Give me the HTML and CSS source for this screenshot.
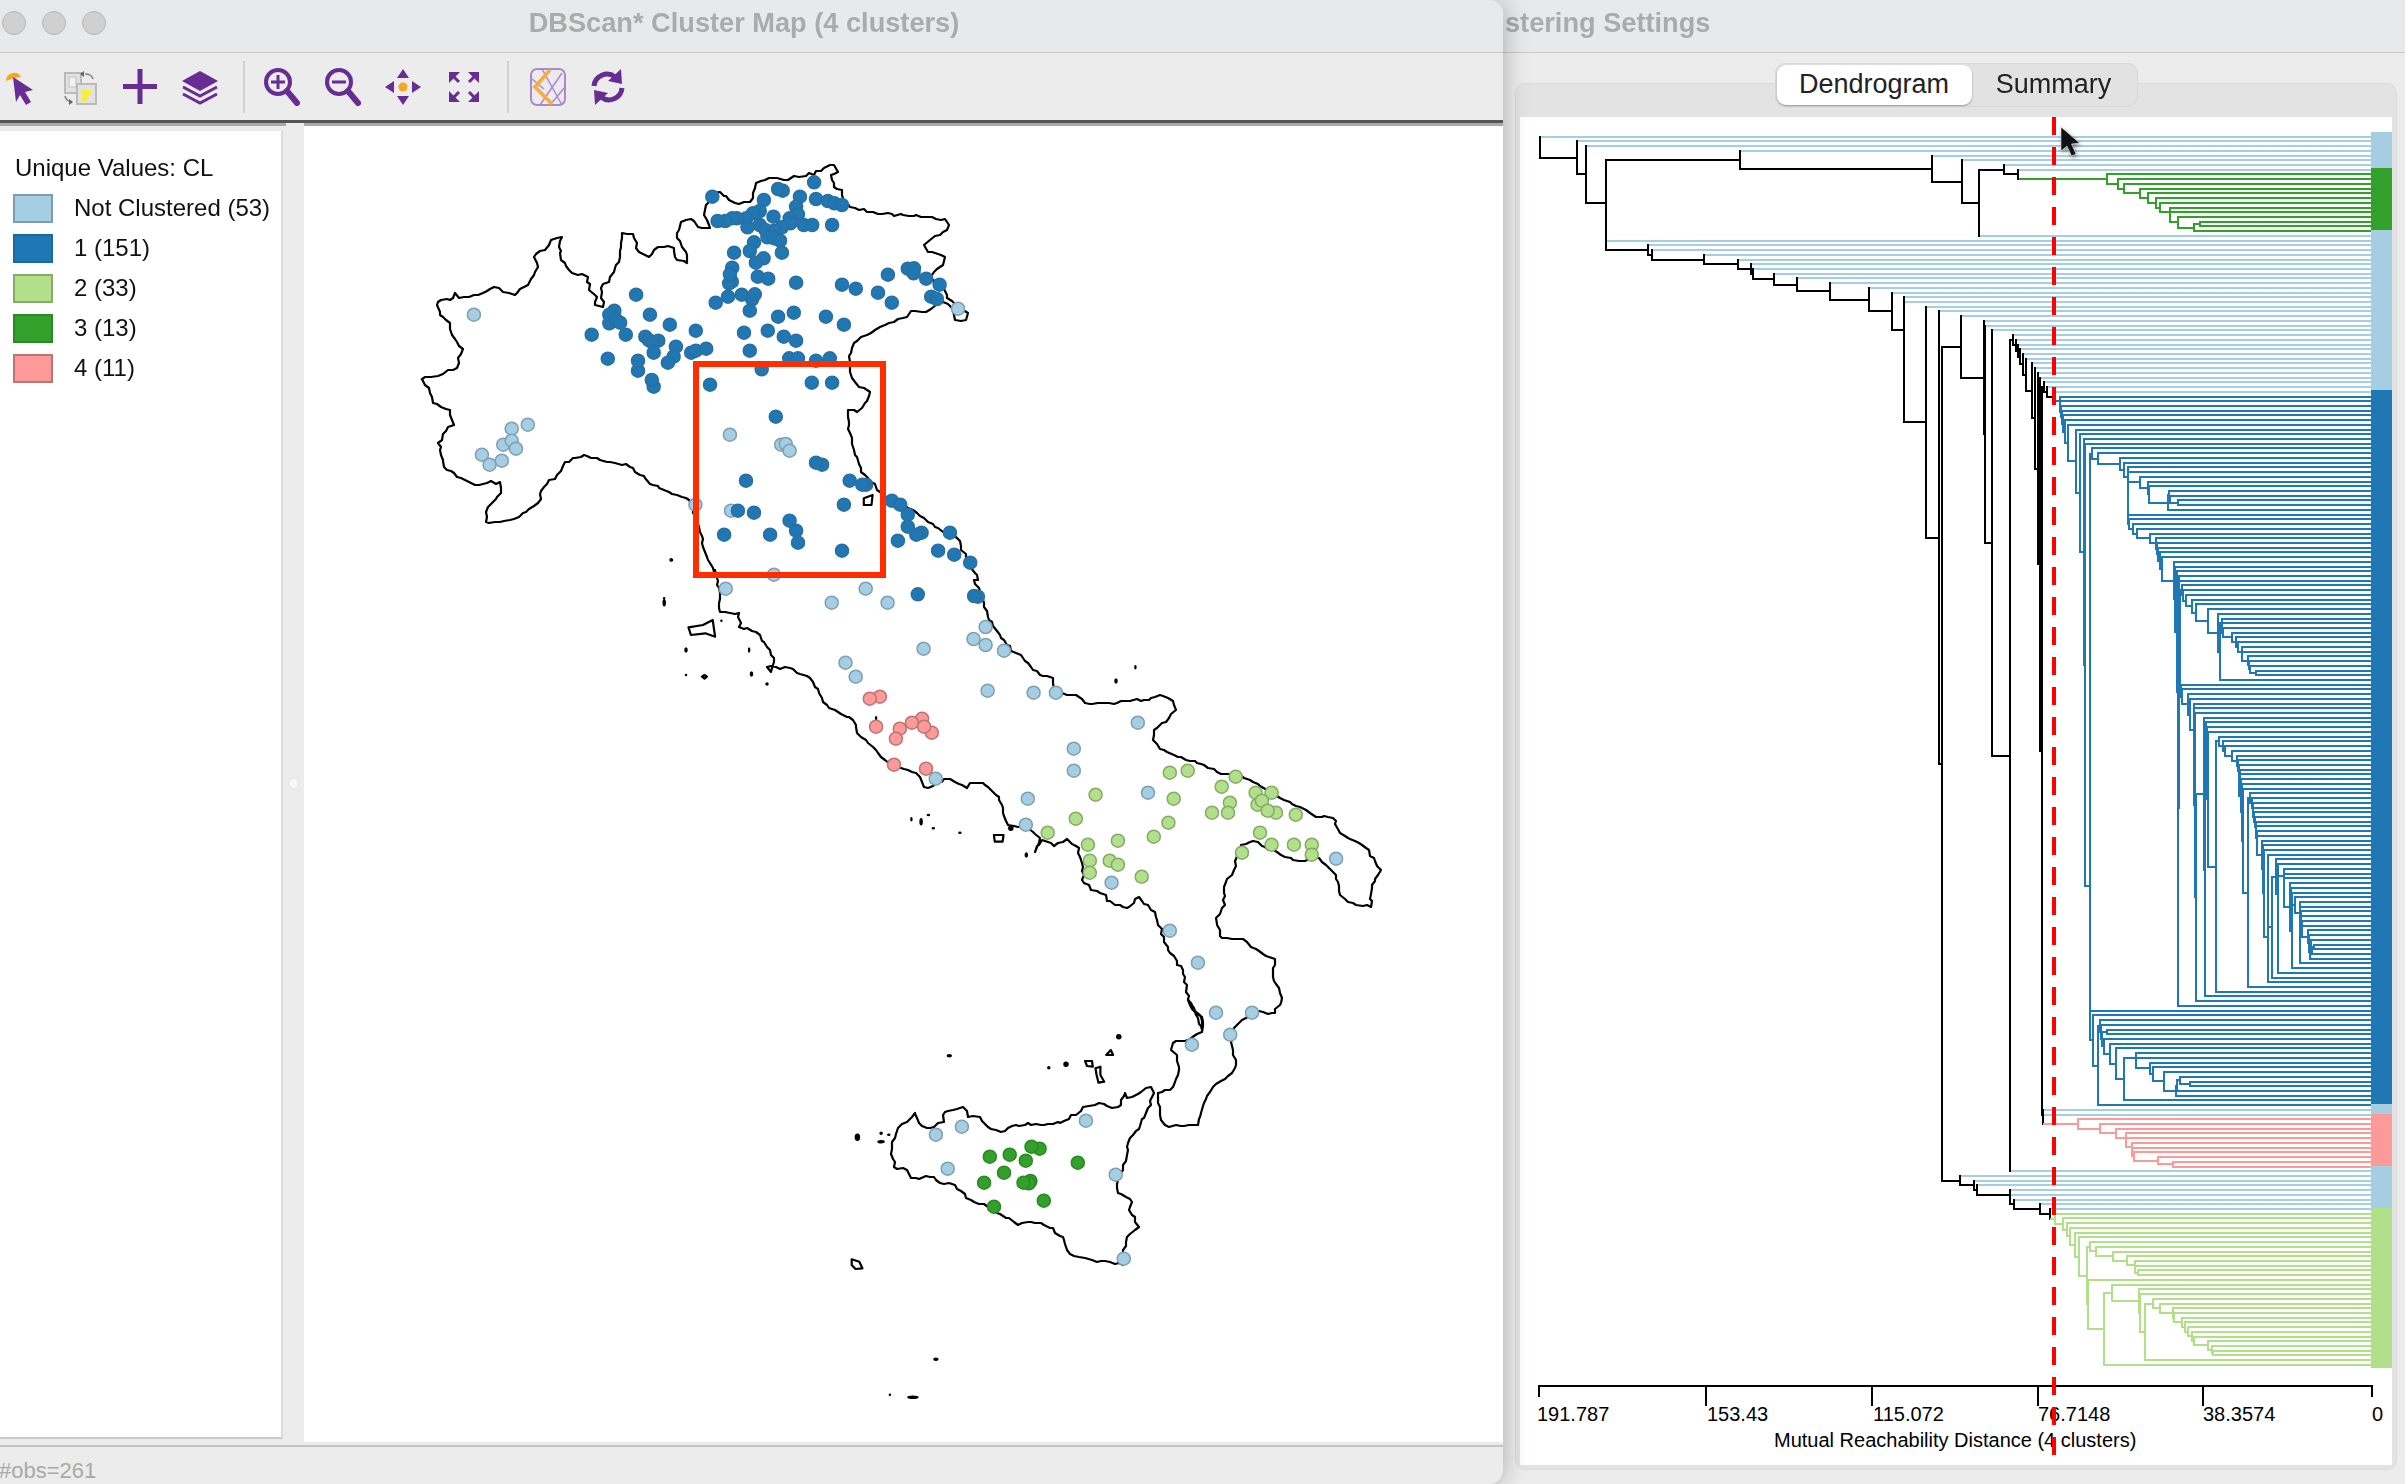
FILE: index.html
```html
<!DOCTYPE html>
<html lang="en">
<head>
<meta charset="utf-8">
<title>DBScan* Cluster Map</title>
<link rel="stylesheet" href="styles.css">
</head>
<body>
<div class="desktop">
  <section class="win win-map">
    <header class="titlebar">
      <div class="lights"><i class="light"></i><i class="light"></i><i class="light"></i></div>
      <div class="title title-map">DBScan* Cluster Map (4 clusters)</div>
    </header>
    <nav class="toolbar">
      <div class="tools tools-a">
        <span class="tool"><svg class="ico" viewBox="0 0 40 40"><path class="orange" d="M6 14a8 8 0 0 1 15-4l-7 1z"/><path class="pu" d="M13 10l3 25 4-7 6 10 5-3-6-10 8-2z"/></svg></span>
        <span class="tool"><svg class="ico ico-soft" viewBox="0 0 40 40"><rect class="doc" x="5" y="6" width="16" height="20"/><rect class="doc" x="17" y="17" width="19" height="20"/><rect class="docin" x="9" y="10" width="7" height="10"/><path class="yel" d="M22 23h9v5h-4v6h-5z"/><path class="mini" d="M25 7c4 0 7 1 8 5M5 29c1 4 3 5 7 6"/><path class="minih" d="M24 4v6l-4-3zM9 32v6l4-3z"/></svg></span>
        <span class="tool"><svg class="ico" viewBox="0 0 40 40"><path class="st5" d="M20 2v35M3 19.500h34"/></svg></span>
        <span class="tool"><svg class="ico" viewBox="0 0 40 40"><path class="pu" d="M20 4l18 10-18 10L2 14z"/><path class="st3" d="M3 20l17 9 17-9M3 27l17 9 17-9"/></svg></span>
      </div>
      <i class="sep"></i>
      <div class="tools tools-b">
        <span class="tool"><svg class="ico" viewBox="0 0 40 40"><circle class="st4" cx="17" cy="15" r="12"/><path class="st5r" d="M26 24l10 12"/><path class="st3" d="M17 8v14M10 15h14"/></svg></span>
        <span class="tool"><svg class="ico" viewBox="0 0 40 40"><circle class="st4" cx="17" cy="15" r="12"/><path class="st5r" d="M26 24l10 12"/><path class="st3" d="M10 15h14"/></svg></span>
        <span class="tool"><svg class="ico" viewBox="0 0 40 40"><path class="pu" d="M20 2l6 9H14zM20 38l-6-9h12zM2 20l9-6v12zM38 20l-9 6V14z"/><circle class="orange" cx="20" cy="20" r="4.500"/></svg></span>
        <span class="tool"><svg class="ico" viewBox="0 0 40 40"><path class="pu" d="M5 5h11L5 16zM35 5v11L24 5zM5 35V24l11 11zM35 35H24l11-11z"/><path class="st3" d="M9 9l6 6M31 9l-6 6M9 31l6-6M31 31l-6-6"/></svg></span>
      </div>
      <i class="sep sep-b"></i>
      <div class="tools tools-c">
        <span class="tool"><svg class="ico" viewBox="0 0 40 40"><rect class="mapbox" x="3" y="2" width="34" height="36" rx="6"/><path class="hatch" d="M14 2l20 36M34 6L12 38M4 12l12 10M37 20L22 38"/><path class="orangeline" d="M22 3L7 20l17 17"/></svg></span>
        <span class="tool"><svg class="ico" viewBox="0 0 40 40"><path class="st5" d="M6 19A13 13 0 0 1 27 10M34 21a13 13 0 0 1-21 9"/><path class="pu" d="M33 2l1 15-14-3zM7 38L6 23l14 3z"/></svg></span>
      </div>
    </nav>
    <div class="darkrule"></div>
    <div class="rules"><i class="rule rule-left"></i><i class="rule rule-right"></i></div>
    <main class="mapbody">
      <aside class="legendcol">
        <div class="legend">
          <div class="legend-title">Unique Values: CL</div>
          <div class="legend-row"><i class="swatch sw-nc"></i><span>Not Clustered (53)</span></div>
          <div class="legend-row"><i class="swatch sw-1"></i><span>1 (151)</span></div>
          <div class="legend-row"><i class="swatch sw-2"></i><span>2 (33)</span></div>
          <div class="legend-row"><i class="swatch sw-3"></i><span>3 (13)</span></div>
          <div class="legend-row"><i class="swatch sw-4"></i><span>4 (11)</span></div>
        </div>
      </aside>
      <div class="sash"><i class="sash-dot"></i></div>
      <div class="canvas">
        <svg id="map" class="mapsvg" viewBox="304 126 1199 1316" width="1199" height="1316">
          <path id="coast" class="coast"/>
          <path id="isles" class="isles"/>
          <g id="dots"></g>
          <rect class="selection" x="696" y="364" width="187" height="211"/>
        </svg>
      </div>
    </main>
    <footer class="status">#obs=261</footer>
  </section>

  <section class="win win-den">
    <header class="titlebar titlebar-den">
      <div class="title title-den">stering Settings</div>
    </header>
    <div class="den-body">
      <div class="segments">
        <span class="seg seg-on">Dendrogram</span>
        <span class="seg">Summary</span>
      </div>
      <div class="groupbox">
        <div class="den-panel">
          <svg id="den" class="densvg" viewBox="1520 117 872 1348" width="872" height="1348">
            <g id="tree"></g>
            <rect class="f-lb" x="2371" y="132" width="21" height="36"/>
            <rect class="f-g" x="2371" y="168" width="21" height="62"/>
            <rect class="f-lb" x="2371" y="230" width="21" height="160"/>
            <rect class="f-b" x="2371" y="390" width="21" height="714"/>
            <rect class="f-lb" x="2371" y="1104" width="21" height="10"/>
            <rect class="f-p" x="2371" y="1114" width="21" height="52"/>
            <rect class="f-lb" x="2371" y="1166" width="21" height="42"/>
            <rect class="f-lg" x="2371" y="1208" width="21" height="160"/>
            <path class="axis" d="M1538 1386h835M1539 1386v11M1706 1386v20M1872 1386v20M2038 1386v20M2203 1386v20M2372 1386v11"/>
            <text class="tick" x="1537" y="1421">191.787</text>
            <text class="tick" x="1707" y="1421">153.43</text>
            <text class="tick" x="1873" y="1421">115.072</text>
            <text class="tick" x="2038" y="1421">76.7148</text>
            <text class="tick" x="2203" y="1421">38.3574</text>
            <text class="tick" x="2372" y="1421">0</text>
            <text class="tick" x="1774" y="1447">Mutual Reachability Distance (4 clusters)</text>
            <path class="cut" d="M2054 117V1456"/>
            <path class="pointer" d="M2061 127v24l6-5 4.500 10 4.500-2-4.500-10 8-1z"/>
          </svg>
        </div>
      </div>
    </div>
  </section>
</div>
<script src="charts.js"></script>
</body>
</html>
```
FILE: styles.css
```css
* { box-sizing: border-box; }
html, body { margin: 0; padding: 0; background: #ececec; }
body { font-family: "Liberation Sans", Arial, sans-serif; }
.desktop { display: flex; width: 2405px; height: 1484px; overflow: hidden; }

.win { display: flex; flex-direction: column; height: 1484px; background: #ececec; }
.win-map { position: relative; z-index: 2; width: 1503px; flex: none; border-radius: 0 14px 14px 0; box-shadow: 0 0 26px rgba(0,0,0,.28); overflow: hidden; }
.win-den { flex: 1; min-width: 0; }

.titlebar { display: flex; align-items: center; height: 53px; flex: none; background: #e8e9ea; border-bottom: 1px solid #c9c9c9; padding-bottom: 7px; }
.lights { display: flex; gap: 16px; width: 106px; flex: none; padding-left: 2px; }
.light { width: 24px; height: 24px; border-radius: 50%; background: #d0d0d0; border: 1px solid #b8b8b8; }
.title { font-size: 27.200px; font-weight: 700; color: #ababab; white-space: nowrap; filter: blur(.4px); }
.title-map { flex: 1; text-align: center; padding-right: 121px; }
.titlebar-den { padding-left: 2px; }

.toolbar { display: flex; align-items: center; height: 67px; flex: none; background: #ececec; margin-left: -10px; }
.tools { display: flex; }
.tool { display: flex; align-items: center; justify-content: center; width: 61px; height: 52px; }
.tools-a .tool, .tools-c .tool { width: 60px; }
.ico { width: 40px; height: 40px; display: block; filter: blur(.5px); }
.ico-soft { opacity: .9; }
.sep { width: 2px; height: 52px; background: #d2d2d2; margin: 0 5.500px 0 13px; }
.sep-b { margin: 0 8.500px 0 12.500px; }
.pu { fill: #672d93; }
.orange { fill: #f6a81c; }
.st5 { fill: none; stroke: #672d93; stroke-width: 5; }
.st5r { fill: none; stroke: #672d93; stroke-width: 6; stroke-linecap: round; }
.st4 { fill: none; stroke: #672d93; stroke-width: 4; }
.st3 { fill: none; stroke: #672d93; stroke-width: 3; }
.doc { fill: #e2e2e2; stroke: #b5b5b5; stroke-width: 2; }
.docin { fill: #f2f2f2; stroke: #bdbdbd; stroke-width: 1; }
.yel { fill: #f7f02a; }
.mini { fill: none; stroke: #777; stroke-width: 1.500; }
.minih { fill: #555; }
.mapbox { fill: #eee8f2; stroke: #a78dc4; stroke-width: 2; }
.hatch { fill: none; stroke: #a78dc4; stroke-width: 1.500; }
.orangeline { fill: none; stroke: #f6ad3c; stroke-width: 3.500; }

.darkrule { height: 3px; flex: none; background: #555; }
.rules { display: flex; justify-content: space-between; height: 3px; flex: none; background: #ececec; }
.rule { display: block; height: 3px; background: #a9a9a9; }
.rule-left { width: 286px; }
.rule-right { width: 1199px; }

.mapbody { display: flex; height: 1319px; flex: none; background: #ececec; }
.legendcol { width: 283px; flex: none; padding-top: 5px; padding-bottom: 6px; }
.legend { height: 100%; background: #fff; border-right: 2px solid #dcdcdc; border-bottom: 2px solid #c9c9c9; padding-top: 23px; color: #111; font-size: 24px; }
.legend-title { height: 28px; line-height: 28px; padding-left: 15px; margin-bottom: 6px; filter: blur(.35px); }
.legend-row { display: flex; align-items: center; height: 40px; padding-left: 13px; gap: 21px; }
.legend-row span { filter: blur(.35px); }
.swatch { width: 40px; height: 29px; flex: none; border: 2px solid; }
.sw-nc { background: #a6cee3; border-color: #7c9cb0; }
.sw-1 { background: #1f78b4; border-color: #1b6a9f; }
.sw-2 { background: #b2df8a; border-color: #86aa68; }
.sw-3 { background: #33a02c; border-color: #2a8a25; }
.sw-4 { background: #fb9a99; border-color: #bd7474; }

.sash { display: flex; align-items: center; justify-content: center; width: 21px; flex: none; padding-bottom: 4px; }
.sash-dot { width: 11px; height: 11px; border-radius: 50%; background: #f8f8f8; border: 1px solid #e2e2e2; }
.canvas { flex: 1; background: #fff; height: 1316px; }
.mapsvg { display: block; filter: blur(.35px); }
.coast { fill: none; stroke: #000; stroke-width: 2.200; stroke-linejoin: round; }
.isles { fill: #000; stroke: #000; stroke-width: 1.500; }
.selection { fill: none; stroke: #ff2e00; stroke-width: 6; }
.d-lb { fill: #a6cee3; stroke: #7f9fb4; stroke-width: 1.500; }
.d-b { fill: #1f78b4; stroke: #2c6f9f; stroke-width: 1.500; }
.d-lg { fill: #b2df8a; stroke: #86aa68; stroke-width: 1.500; }
.d-g { fill: #33a02c; stroke: #2a8a25; stroke-width: 1.500; }
.d-p { fill: #fb9a99; stroke: #bd7474; stroke-width: 1.500; }

.status { flex: 1; border-top: 2px solid #c4c4c4; font-size: 22px; color: #a9a9a9; padding: 11px 0 0; text-indent: -1px; }

.den-body { flex: 1; display: flex; flex-direction: column; align-items: center; padding: 10px 8px 14px 12px; }
.segments { display: flex; align-items: center; height: 44px; width: 363px; flex: none; background: #e2e2e2; border: 1px solid #dadada; border-radius: 10px; position: relative; z-index: 1; font-size: 27px; color: #222; }
.seg { display: flex; align-items: center; justify-content: center; height: 40px; width: 164px; padding-bottom: 2px; filter: blur(.3px); }
.seg-on { width: 195px; background: #fff; border-radius: 9px; box-shadow: 0 1px 2px rgba(0,0,0,.35); margin-left: 1px; filter: none; }
.groupbox { flex: 1; width: 100%; margin-top: -24px; background: #e3e3e3; border: 1px solid #dcdcdc; border-radius: 10px; padding: 33px 4px 4px 4px; }
.den-panel { height: 100%; background: #fff; overflow: hidden; }
.densvg { display: block; }
.f-lb { fill: #a6cee3; }
.f-g { fill: #33a02c; }
.f-b { fill: #1f78b4; }
.f-p { fill: #fb9a99; }
.f-lg { fill: #b2df8a; }
.axis { fill: none; stroke: #000; stroke-width: 2; }
.tick { font-size: 20px; fill: #000; }
.cut { fill: none; stroke: #ff0000; stroke-width: 4; stroke-dasharray: 18 12; }
.pointer { fill: #111; stroke: #fff; stroke-width: .5; filter: drop-shadow(1px 2px 2px rgba(0,0,0,.45)); }
.branch { fill: none; stroke-width: 2; shape-rendering: crispEdges; }
```
FILE: charts.js
```javascript
(function () {
  var NS = 'http://www.w3.org/2000/svg';
  function el(name, cls, attrs) {
    var e = document.createElementNS(NS, name);
    e.setAttribute('class', cls);
    for (var k in attrs) e.setAttribute(k, attrs[k]);
    return e;
  }

  /* ---------- dendrogram: [x, topChild, bottomChild], 0 is a leaf ---------- */
  var L = 0;
  var T = function (v) { return 1900 + v / 3; };
  var ch = function (xs, end) {
    return xs.reduceRight(function (acc, x) { return [x, L, acc]; }, end === undefined ? L : end);
  };
  var ch3 = function (xs, end) { return ch(xs.map(T), end); };
  var N3 = function (v, a, b) { return [T(v), a, b]; };

  var n828 = N3(828, N3(830, N3(840, L, N3(870, L, L)), L), L);
  var n672 = N3(672, ch3([708, 708.5, 750, 760, 792], n828), L);
  var n600 = N3(600, L, N3(603, L, N3(606, N3(622, L, L), ch3([612, 630, 648], n672))));
  var r580 = N3(580, L, N3(593, n600, L));

  var r4 = N3(1235, N3(1242, L, L), L);
  var r2 = N3(1230, N3(1232, L, r4), L);
  var q4 = ch3([1202, 1202.5, 1206, 1206.5, 1224, 1228], r2);
  var q3 = N3(1200, q4, L);
  var q1 = ch3([1200, 1200.5], q3);
  var x1186 = N3(1186, L, q1);
  var p1 = ch3([1172, 1176], x1186);
  var o2 = N3(1176, p1, L);
  var o = N3(1170, L, o2);
  var q1152 = ch3([1152, 1152.5, 1153], o);
  var n2 = N3(1134.5, q1152, L);
  var n1 = N3(1134, L, n2);
  var t1128 = N3(1128, L, n1);
  var m2 = N3(1115, t1128, L);
  var m0 = N3(1104, L, m2);
  var m = N3(1104.5, m0, L);
  var k = ch3([1050, 1056, 1058, 1060, 1062, 1065, 1068, 1068.5, 1070, 1072, 1086, 1090, 1092], m);
  var h = N3(1044, k, L);
  var j = ch3([1018, 1024, 1027, 1030], h);
  var dd = ch3([958, 970, 975, 995, 1012, 1015, 1017, 1020], j);
  var d = N3(948, dd, L);
  var c3 = ch3([918, 920, 924], d);
  var c2 = N3(915, c3, L);
  var c1 = N3(912, L, c2);
  var b = N3(888, c1, L);
  var g = ch3([882, 883, 884], b);
  var n863 = ch3([863, 870], g);
  var mm = ch3([843, 846], n863);
  var tc = ch3([965, 965.5, 968, 995, 1008, 1014, 1026, 1026.5, 1043, 1047, 1050, 1068]);
  var t953 = N3(953, L, N3(960, tc, L));
  var i95 = ch3([845, 850, 857, 875, 888, 923], t953);
  var e5 = N3(840, i95, mm);
  var e4 = N3(838, L, e5);
  var e3 = N3(834, e4, L);
  var e1 = ch3([822, 826, 832, 836], e3);
  var a684d = ch3([684.6, 688, 700, 712, 750, 768, 771, 775, 781, 787], e1);
  var n808 = ch3([808, 810, 833]);
  var n803 = N3(803, n808, L);
  var n720 = ch3([720, 745, 745.5], n803);
  var a684c = N3(684.2, n720, a684d);
  var n575 = ch3([575, 595, 660, 672, 684, 684.5], a684c);
  var c1x = N3(570.5, n575, L);
  var c2x = N3(570, c1x, r580);
  var blue = ch3([480, 481, 483, 486, 490, 495, 503, 527, 540, 551, 555], c2x);

  var pink = ch([2077.7, 2100, 2116, 2126, 2126.2, 2131.7, 2132.3, 2133.7, 2157.7], [2173.3, L, L]);
  var n206 = ch([2042.7, 2043.3], pink);
  var mtop = [2042, ch([2043.5, 2047, 2054], blue), n206];
  var s = ch([2013, 2016, 2018, 2020, 2023, 2026, 2032, 2034.5, 2037.5, 2040], mtop);
  var r = [2010, s, L];
  var x = ch([1961, 1984, 1984.5, 1992], r);

  var s1108 = ch([2139.3, 2139.6], [2145.1,
    ch([2153.2, 2159.6, 2173.4, 2173.7, 2181.5, 2185, 2187.8, 2192.4, 2194.2, 2208, 2211.5], [2212.6, L, L]), L]);
  var y2 = [2087.7, L, [2103.6, [2111.7, L, s1108], L]];
  var y1 = [2087.4, ch([2089.7, 2095.5, 2113.4, 2127.2, 2134.7, 2135], [2137.6, L, L]), y2];
  var green2 = ch([2055, 2062.6, 2066.6, 2069.5, 2075.3, 2078.8], y1);
  var v = ch([1960, 1974.3, 1977.2, 2010, 2010.3, 2013.6, 2039.5, 2050], green2);
  var w = [1942, x, v];
  var bottom = ch([1606.3, 1648, 1652, 1704, 1738, 1751.4, 1753.2, 1774, 1797.4, 1830, 1869.4, 1892, 1903.6, 1903.8, 1926, 1939], w);

  var green = ch([2107, 2118, 2124, 2140, 2148, 2155.5, 2160, 2170, 2170.3, 2178], [2194, [2200, L, L], L]);
  var top = ch([1740, 1932, 1962], [1978.5, ch([2004, 2018], green), L]);
  var root = ch([1540, 1577, 1586], [1606, top, bottom]);

  var LB = '#a6cee3', BK = '#000000';
  var spans = [[8, LB], [13, '#33a02c'], [34, LB], [151, '#1f78b4'], [2, LB], [11, '#fb9a99'], [9, LB], [33, '#b2df8a']];
  function rowColor(i) {
    for (var n = 0, t = 0; n < spans.length; n++) { t += spans[n][0]; if (i < t) return spans[n][1]; }
    return LB;
  }
  var row = 0, END = 2371, paths = {};
  function add(c, s) { paths[c] = (paths[c] || '') + s; }
  function rnd(n) { return Math.round(n); }
  function walk(n) {
    if (n === L) { var i = row++; return { leaf: true, y: 136.7 + 4.724 * i, c: rowColor(i) }; }
    var a = walk(n[1]), z = walk(n[2]);
    var c = (a.c === z.c && a.c !== LB) ? a.c : BK;
    [a, z].forEach(function (kid) {
      add(kid.c, 'M' + rnd(n[0]) + ' ' + rnd(kid.y) + 'H' + (kid.leaf ? END : rnd(kid.x)));
    });
    add(c, 'M' + rnd(n[0]) + ' ' + (rnd(a.y) - 1) + 'V' + (rnd(z.y) + 1));
    return { leaf: false, x: n[0], y: (a.y + z.y) / 2, c: c };
  }
  walk(root);
  var treeG = document.getElementById('tree');
  Object.keys(paths).forEach(function (c) {
    var p = el('path', 'branch', { d: paths[c], stroke: c });
    treeG.appendChild(p);
  });

  /* ---------- map: coordinates read from three crops of the map ---------- */
  function z3(a) { return conv(a, 400, 2.613, 150); }
  function z4(a) { return conv(a, 640, 2.063, 550); }
  function z5(a) { return conv(a, 800, 2.613, 1000); }
  function conv(a, ox, sx, oy) {
    var out = [];
    for (var i = 0; i < a.length; i += 2) out.push([ox + a[i] / sx, oy + a[i + 1] / 3]);
    return out;
  }
  var mainland = [].concat(
    z3([57,688,65,680,80,682,100,678,125,660,150,655,155,640,152,625,165,598,150,575,135,555,130,520,105,495,98,455,130,450,145,430,155,445,180,440,205,435,245,410,270,425,300,435,325,410,335,405,350,375,360,350,350,320,380,300,395,270,422,262,418,310,430,340,450,370,490,380,495,420,515,440,510,465,530,470,525,415,550,380,575,320,580,250,610,252,625,305,650,320,665,300,690,290,715,295,725,330,750,340,750,315,738,290,725,265,735,215,760,208,790,235,810,235,795,195,800,165,815,130,835,127,860,150,885,162,915,155,930,100,965,85,985,85,1015,90,1030,78,1060,78,1100,62,1135,45,1145,65,1125,75,1135,110,1155,120,1160,155,1175,172,1220,185,1260,192,1330,198,1425,208,1435,225,1420,245,1385,270,1370,285,1380,305,1425,322,1420,345,1395,365,1385,385,1420,395,1430,445,1470,480,1485,490,1480,510,1450,510,1440,470,1420,455,1400,465,1375,485,1335,482,1325,500,1290,515,1255,530,1230,550,1185,580,1178,610,1175,650,1180,685,1200,710,1228,725,1215,760,1195,785,1170,780,1170,800,1175,850,1185,900,1205,965,1230,995,1260,1035,1300,1060,1340,1080,1370,1105,1420,1145,1455,1165,1480,1220,1510,1290]),
    z4([690,90,710,160,720,210,745,265,775,310,800,340,825,375,852,385,855,420,880,435,900,435,918,458,960,458,985,460,1005,452,1040,450,1072,435,1100,452,1105,480,1085,515,1060,540,1058,570,1072,598,1110,620,1150,640,1190,665,1230,672,1265,695,1300,725,1340,755,1395,800,1430,805,1445,850,1490,885,1515,925,1528,960,1510,1005,1508,1072,1470,1060,1445,1035,1435,975,1420,950,1400,925,1360,932,1330,920,1290,890,1265,872,1240,885,1225,960,1205,1010,1207,1065,1188,1105,1200,1165,1245,1168,1260,1190,1310,1228,1305,1280,1325,1345,1310,1390,1285,1385]),
    z5([1200,32,1165,55,1135,85,1125,125,1140,180,1130,220,1080,260,1055,310,1040,375,995,378,965,380,942,360,935,280,975,262,990,200,985,165,970,150,975,130,1020,118,1050,95,1050,50,1020,15,1015,0]),
    z4([1160,1440,1158,1400,1135,1360,1120,1260,1090,1200,1065,1100,1030,1040,1005,1075,980,1065,950,1030,915,1000,915,975,905,895,880,868,855,888,830,870,815,905,825,865,800,835,760,825,740,740,708,698,680,700,675,715,640,688,610,695,595,715,585,710,570,670,530,655,505,630,480,590,455,560,440,510,385,465,370,430,350,385,310,355,280,352,262,350,270,365,277,325,262,290,240,245,205,230,205,190,165,185,165,130,155,60]),
    z3([820,1265,790,1180,782,1130,755,1050,690,1020,660,1005,600,950,550,935,480,915,430,935,410,975,375,1010,360,1060,310,1100,260,1115,225,1115,225,1085,240,1060,265,1030,260,995,195,1005,160,985,115,950,100,880,125,830,140,825,130,780,85,760,75,715,57,688])
  );
  var sicily = z5([300,340,310,370,340,385,375,365,378,335,425,322,440,350,470,350,490,380,525,395,565,375,660,373,720,345,740,320,780,310,815,325,840,315,848,280,855,295,890,275,918,262,925,280,905,340,870,405,855,440,845,510,832,540,830,580,868,605,860,630,885,680,855,710,843,760,845,795,810,785,775,785,745,775,705,762,690,720,660,685,630,668,580,668,570,675,545,655,515,640,490,620,435,595,405,555,365,550,350,530,290,535,280,510,245,500,240,440,255,385,280,365,300,340]);
  var loops = [
    z4([100,232,130,225,150,210,155,260,135,250,105,255,100,232]),
    z4([730,855,750,855,748,875,732,875,730,855]),
    z4([133,375,138,380,133,386,128,380,133,375]),
    z3([1212,1045,1235,1035,1232,1065,1212,1065,1212,1045]),
    z5([745,183,763,183,765,200,750,198,745,183]),
    z5([772,205,785,200,785,225,795,245,780,248,775,225,772,205]),
    z5([800,165,812,150,818,165,800,165]),
    z5([135,778,155,785,163,805,145,807,135,795,135,778])
  ];
  var seed = 7;
  function rand() { seed = (seed * 16807) % 2147483647; return seed / 2147483647 - 0.5; }
  function rough(pts) {
    var s = 'M' + pts[0][0].toFixed(1) + ' ' + pts[0][1].toFixed(1);
    for (var i = 1; i < pts.length; i++) {
      var a = pts[i - 1], e = pts[i], dx = e[0] - a[0], dy = e[1] - a[1];
      var len = Math.sqrt(dx * dx + dy * dy), steps = Math.max(1, Math.floor(len / 4));
      for (var n = 1; n <= steps; n++) {
        var t = n / steps, jit = n === steps ? 0 : 1;
        var px = a[0] + dx * t + rand() * 3 * jit, py = a[1] + dy * t + rand() * 3 * jit;
        s += 'L' + Math.round(px) + ' ' + Math.round(py);
      }
    }
    return s;
  }
  function plain(pts) {
    return 'M' + pts.map(function (p) { return p[0].toFixed(1) + ' ' + p[1].toFixed(1); }).join('L');
  }
  var coastD = rough(mainland) + 'Z' + rough(sicily) + 'Z';
  loops.forEach(function (l) { coastD += plain(l) + 'Z'; });
  document.getElementById('coast').setAttribute('d', coastD);

  function blob(p, rx, ry) {
    return 'M' + (p[0] - rx).toFixed(1) + ' ' + p[1].toFixed(1) +
      'a' + rx + ' ' + ry + ' 0 1 0 ' + (2 * rx) + ' 0a' + rx + ' ' + ry + ' 0 1 0 ' + (-2 * rx) + ' 0Z';
  }
  var isleD = '';
  function isles(list, fn) {
    for (var i = 0; i < list.length; i += 4) {
      isleD += blob(fn([list[i], list[i + 1]])[0], list[i + 2], list[i + 3]);
    }
  }
  isles([65,30,1,1, 50,158,1,3, 95,300,1,2, 225,300,.5,2, 230,372,1,2, 262,402,1,1, 982,393,1,2, 1022,352,.5,1.5, 95,375,.5,.5, 168,212,.5,.5, 487,505,.5,1.5, 580,815,1,3, 560,808,.5,1.5, 595,795,1,.5, 605,835,1,.5, 660,848,1,.5, 765,835,2,2, 797,915,1,2], z4);
  isles([708,1230,1,1, 690,1345,.5,.5], z3);
  isles([150,412,2,3, 212,400,1,1, 212,425,3,1, 232,404,1,.5, 390,167,2,1, 833,110,2,2, 650,203,1,1, 695,193,2,2, 355,1078,2,1, 295,1192,5,1, 235,1184,.5,.5], z5);
  document.getElementById('isles').setAttribute('d', isleD);

  var dots = [
    ['d-lb', z3([193,494,334,824,292,836,270,884,292,872,303,896,214,914,234,944,266,932,862,854,996,884,1008,882,1018,902,772,1064,865,1082,977,1274,851,1316,1217,1316,1128,1358,1274,1358,1458,476])],
    ['d-lb', z4([713,231,688,267,713,285,751,302,585,296,424,338,445,380,717,422,812,428,858,428,1027,518,895,596,895,662,610,686,800,746,1048,728,796,824,973,998,1436,926,1093,1142,1151,1238])],
    ['d-lb', z5([1087,38,1181,38,1124,104,1024,134,747,362,423,380,355,404,386,506,825,524,846,776])],
    ['d-b', z3([816,140,1000,122,988,117,1082,97,1045,140,1087,147,951,150,1118,153,1135,160,1155,165,1035,170,1040,193,1018,205,940,183,922,190,905,205,880,205,868,205,850,213,830,213,976,200,940,225,908,232,1020,220,998,232,1055,225,1077,225,1129,225,955,240,978,242,960,262,978,265,993,272,925,277,914,303,873,308,998,308,950,325,930,338,868,353,867,395,860,400,862,373,935,380,962,386,1035,398,1155,404,1191,416,1249,428,1275,374,1327,356,1342,370,1343,355,1375,386,1410,404,1388,440,1403,447,1285,458,617,434,560,482,547,520,547,494,565,510,575,518,653,494,705,524,773,542,825,458,857,440,893,434,920,448,927,433,914,482,988,500,1029,488,1113,500,1160,524,899,548,961,542,1003,560,1035,572,914,602,501,554,590,554,641,560,650,570,675,572,660,578,721,590,663,608,715,620,700,638,761,608,773,602,800,596,543,626,622,662,622,632,663,710,658,690,1017,625,1040,625,1087,632,1123,625,945,658,810,704,1076,698,1129,698,982,800,1103,944,1087,938,904,992,1175,992,1218,1004,1208,1004,1160,1064,1285,1052,1307,1064,1327,1094,883,1082,925,1088,1018,1112,1035,1142,847,1154,967,1154,1040,1178,1363,1148,1327,1130,1349,1154,1437,1148,1301,1172,1155,1202,1406,1202,1448,1214,1490,1238,1353,1333,1510,1340,1500,1338])],
    ['d-p', z4([495,440,474,446,487,530,582,506,561,518,536,536,602,548,586,530,528,566,524,644,590,656])],
    ['d-lg', z4([1093,668,1130,662,1229,680,1200,710,940,734,1270,728,1303,728,1101,746,1217,758,1274,764,1283,752,1180,788,1213,788,1312,788,1295,782,1353,794,899,806,1090,818,841,848,1060,860,1279,848,986,872,924,884,1303,884,1349,884,1386,884,1242,908,1386,914,928,932,969,932,986,944,928,968,1035,980])],
    ['d-g', z5([626,446,605,440,496,470,548,464,590,482,726,488,533,518,602,543,598,550,584,548,481,548,637,602,507,620])]
  ];
  var dotG = document.getElementById('dots');
  dots.forEach(function (set) {
    set[1].forEach(function (p) {
      dotG.appendChild(el('circle', set[0], { cx: p[0].toFixed(1), cy: p[1].toFixed(1), r: 6.5 }));
    });
  });
})();
```
